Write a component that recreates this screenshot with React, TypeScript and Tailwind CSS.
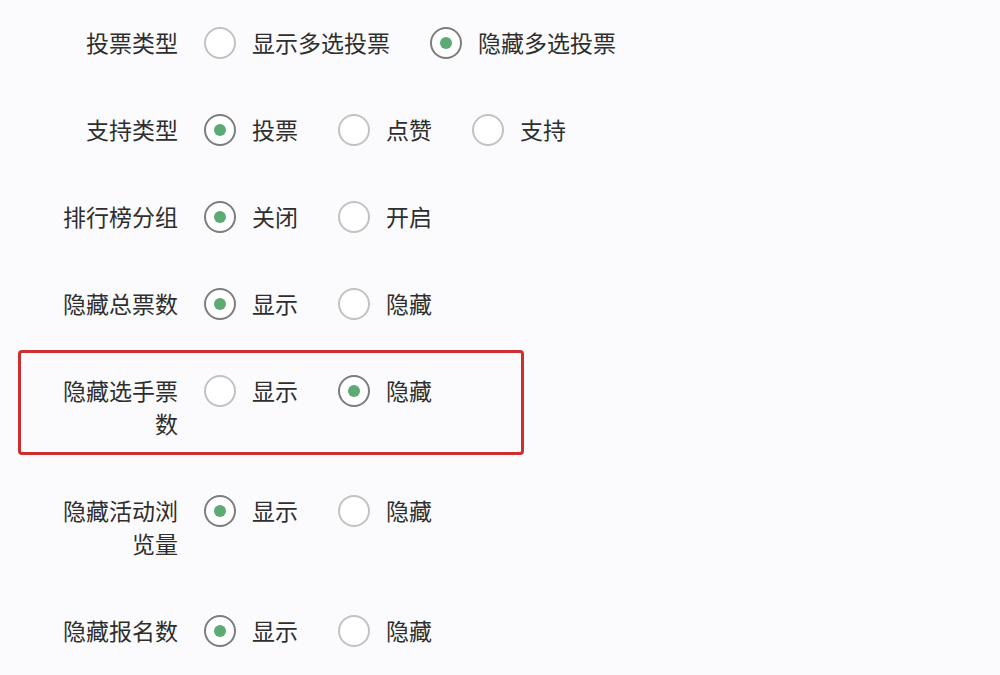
import React from "react";

type Row = { label: string; options: string[]; selected: number; highlight?: boolean };

const rows: Row[] = [
  { label: "投票类型", options: ["显示多选投票", "隐藏多选投票"], selected: 1 },
  { label: "支持类型", options: ["投票", "点赞", "支持"], selected: 0 },
  { label: "排行榜分组", options: ["关闭", "开启"], selected: 0 },
  { label: "隐藏总票数", options: ["显示", "隐藏"], selected: 0 },
  { label: "隐藏选手票数", options: ["显示", "隐藏"], selected: 1, highlight: true },
  { label: "隐藏活动浏览量", options: ["显示", "隐藏"], selected: 0 },
  { label: "隐藏报名数", options: ["显示", "隐藏"], selected: 0 },
];

function Radio({ checked }: { checked: boolean }) {
  return (
    <span
      className={
        checked
          ? "flex h-[32px] w-[32px] shrink-0 items-center justify-center rounded-full border-[2px] border-[#7d7d7d] bg-white"
          : "flex h-[32px] w-[32px] shrink-0 items-center justify-center rounded-full border-[2px] border-[#c2c2c2] bg-white"
      }
    >
      {checked && <span className="h-[12px] w-[12px] rounded-full bg-[#5caa74]" />}
    </span>
  );
}

export default function App() {
  return (
    <div
      className="flex h-[675px] w-[1000px] flex-col gap-[54px] overflow-hidden bg-[#fbfbfd] pt-[26px] text-[#2e2e2e]"
      style={{ fontFamily: '"Noto Sans CJK SC", "Noto Sans", sans-serif' }}
    >
      {rows.map((row) => (
        <div key={row.label} className="relative flex items-start">
          {row.highlight && (
            <div className="pointer-events-none absolute left-[18px] top-[-24px] h-[105px] w-[506px] rounded-[4px] border-[3px] border-[#cf2e2e]" />
          )}
          <div className="ml-[58px] w-[120px] text-right text-[23px] leading-[33px]">{row.label}</div>
          <div className="ml-[26px] flex items-start gap-[40px]">
            {row.options.map((opt, i) => (
              <div key={opt} className="flex h-[33px] items-center gap-[16px]">
                <Radio checked={i === row.selected} />
                <span className="text-[23px] leading-[33px]">{opt}</span>
              </div>
            ))}
          </div>
        </div>
      ))}
    </div>
  );
}
